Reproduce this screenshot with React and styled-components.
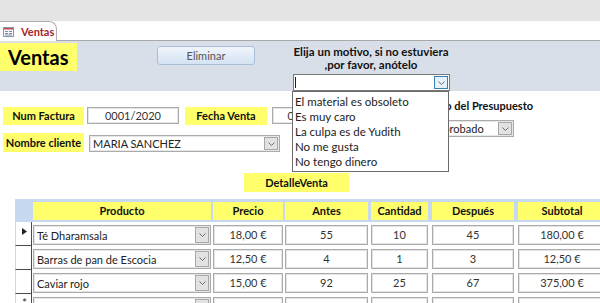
import React from 'react';
import styled, { createGlobalStyle } from 'styled-components';

const GlobalStyle = createGlobalStyle`
  body {
    margin: 0;
    font-family: Lato, "Liberation Sans", sans-serif;
  }
`;

const Screen = styled.div`
  width: 600px;
  height: 303px;
  overflow: hidden;
  background: #fff;
  display: flex;
  flex-direction: column;
  font-size: 11px;
  color: #222;
`;

const TopGray = styled.div`
  height: 21px;
  flex: none;
  background: #e4e4e4;
`;

const TabStrip = styled.div`
  height: 19px;
  flex: none;
  display: flex;
  background: #fff;
  border-bottom: 1px solid #a9a9a9;
`;

const Tab = styled.div`
  width: 57px;
  height: 20px;
  box-sizing: border-box;
  display: flex;
  align-items: center;
  gap: 7px;
  padding-left: 3px;
  background: #fff;
  border-top: 1px solid #b0b0b0;
  border-right: 1px solid #b0b0b0;
  border-top-right-radius: 8px;
  color: #a4262c;
  font-weight: 700;
  font-size: 11px;
`;

const HeaderBand = styled.div`
  height: 50px;
  flex: none;
  display: flex;
  align-items: flex-start;
  background: #d9dfe9;
  position: relative;
  z-index: 2;
`;

const Title = styled.div`
  margin-top: 2px;
  width: 77px;
  height: 28px;
  box-sizing: border-box;
  padding-left: 8px;
  background: #ffff6b;
  color: #000;
  font-size: 20px;
  font-weight: 700;
  line-height: 28px;
`;

const Button = styled.button`
  margin: 5px 0 0 80px;
  width: 98px;
  height: 19px;
  padding: 0;
  border: 1px solid #a9bfd9;
  border-radius: 3px;
  background: linear-gradient(#f0f5fb, #d4e3f4);
  color: #555;
  font-family: inherit;
  font-size: 11px;
`;

const Motive = styled.div`
  margin: 4px 0 0 38px;
  width: 156px;
  position: relative;
`;

const MotiveLabel = styled.div`
  font-weight: 700;
  font-size: 11.5px;
  text-align: center;
  line-height: 13px;
  color: #111;
  margin-bottom: 3px;
  white-space: nowrap;
`;

const Combo = styled.div`
  width: ${p => p.$width}px;
  height: ${p => p.$height || 17}px;
  box-sizing: border-box;
  display: flex;
  background: #fff;
  border: 1px solid ${p => (p.$active ? '#7a7a7a' : '#ababab')};
  box-shadow: ${p => (p.$active ? 'none' : 'inset 0 0 0 1px #e6e6e6')};
`;

const ComboText = styled.div`
  flex: 1;
  padding-left: 3px;
  display: flex;
  align-items: center;
  white-space: nowrap;
  overflow: hidden;
  color: #222;
  border-left: ${p => (p.$caret ? '1px solid #222' : 'none')};
  margin: ${p => (p.$caret ? '2px 0 2px 1px' : '0')};
`;

const DropButton = styled.div`
  width: 14px;
  flex: none;
  display: flex;
  align-items: center;
  justify-content: center;
  box-sizing: border-box;
  margin: 1px;
  background: ${p => (p.$active ? '#e5f1fb' : '#e2e2e2')};
  border: 1px solid ${p => (p.$active ? '#3c7fb1' : '#a8a8a8')};
`;

const DropList = styled.div`
  position: absolute;
  top: 100%;
  left: -1px;
  width: 157px;
  box-sizing: border-box;
  padding: 2px 0 2px 2px;
  background: #fff;
  border: 1px solid #6a6a6a;
`;

const DropItem = styled.div`
  line-height: 15px;
  font-size: 11.5px;
  color: #222;
`;

const Body = styled.div`
  display: flex;
  flex-direction: column;
`;

const Fields = styled.div`
  display: flex;
  align-items: flex-start;
`;

const LeftCol = styled.div`
  padding: 16px 0 0 3px;
  width: 350px;
`;

const FieldRow = styled.div`
  display: flex;
  align-items: flex-start;
  margin-top: ${p => p.$top || 0}px;
`;

const Label = styled.div`
  width: ${p => p.$width}px;
  height: ${p => p.$height || 18}px;
  margin-left: ${p => p.$left || 0}px;
  flex: none;
  background: #ffff6b;
  color: #111;
  font-weight: 700;
  text-align: center;
  line-height: ${p => p.$height || 18}px;
  white-space: nowrap;
`;

const TextBox = styled.div`
  width: ${p => p.$width}px;
  height: 17px;
  margin-left: ${p => p.$left || 0}px;
  flex: none;
  box-sizing: border-box;
  border: 1px solid #ababab;
  box-shadow: inset 0 0 0 1px #e6e6e6;
  text-align: center;
  line-height: 15px;
  color: #333;
`;

const Spaced = styled.div`
  margin: ${p => p.$margin};
`;

const EstadoCol = styled.div`
  margin: 8px 0 0 58px;
  width: 122px;
`;

const EstadoLabel = styled.div`
  font-weight: 700;
  text-align: right;
  line-height: 14px;
  color: #111;
  margin-bottom: 7px;
  white-space: nowrap;
`;

const Table = styled.div`
  margin: 7px 0 0 15px;
  width: 600px;
  flex: none;
`;

const columns = '18px 180px 72px 86px 61px 86px 90px';

const HeadRow = styled.div`
  display: grid;
  grid-template-columns: ${columns};
  padding: 3px 0 2px;
  background: #c6d9f0;
`;

const HeadCell = styled.div`
  width: calc(100% - ${p => p.$gap}px);
  height: 18px;
  background: #ffff6b;
  color: #111;
  font-weight: 700;
  text-align: center;
  line-height: 18px;
`;

const DataRow = styled.div`
  display: grid;
  grid-template-columns: ${columns};
  height: 24px;
`;

const Selector = styled.div`
  width: 17px;
  box-sizing: border-box;
  border-left: 1px solid #c6d9f0;
  border-right: 1px solid #4a4a4a;
  border-bottom: 1px solid #4a4a4a;
  padding: 5px 0 0 6px;
  font-size: 12px;
  line-height: 8px;
  color: #333;
`;

const Cell = styled.div`
  margin-top: 3px;
  width: calc(100% - ${p => p.$gap}px);
  height: 20px;
  box-sizing: border-box;
  border: 1px solid #ababab;
  box-shadow: inset 0 0 0 1px #e4e4e4;
  text-align: center;
  line-height: 18px;
  color: #333;
`;

const Chevron = () => (
  <svg width="7" height="4" viewBox="0 0 7 4">
    <path d="M0.5 0.5 L3.5 3.5 L6.5 0.5" fill="none" stroke="#6d6d6d" strokeWidth="1" />
  </svg>
);

const FormIcon = () => (
  <svg width="11" height="10" viewBox="0 0 11 10">
    <rect x="0.5" y="0.5" width="10" height="9" fill="#f4f6fa" stroke="#8a96aa" />
    <rect x="1" y="1" width="9" height="1.5" fill="#c0504d" />
    <path d="M2 4.5h3M2 6.5h3M6 4.5h3M6 6.5h3M2 8h7" stroke="#7f8ea6" />
  </svg>
);

const Arrow = () => (
  <svg width="5" height="7" viewBox="0 0 5 7">
    <path d="M0 0 L5 3.5 L0 7 Z" fill="#222" />
  </svg>
);

const motivos = [
  'El material es obsoleto',
  'Es muy caro',
  'La culpa es de Yudith',
  'No me gusta',
  'No tengo dinero'
];

const lineas = [
  { producto: 'Té Dharamsala', precio: '18,00 €', antes: 55, cantidad: 10, despues: 45, subtotal: '180,00 €' },
  { producto: 'Barras de pan de Escocia', precio: '12,50 €', antes: 4, cantidad: 1, despues: 3, subtotal: '12,50 €' },
  { producto: 'Caviar rojo', precio: '15,00 €', antes: 92, cantidad: 25, despues: 67, subtotal: '375,00 €' },
  { producto: '', precio: '', antes: '', cantidad: '', despues: '', subtotal: '', nuevo: true }
];

const heads = [
  { name: 'Producto', gap: 2 },
  { name: 'Precio', gap: 2 },
  { name: 'Antes', gap: 3 },
  { name: 'Cantidad', gap: 4 },
  { name: 'Después', gap: 4 },
  { name: 'Subtotal', gap: 2 }
];

const App = () => {
  return (
    <Screen>
      <GlobalStyle />
      <TopGray />
      <TabStrip>
        <Tab>
          <FormIcon />
          <span>Ventas</span>
        </Tab>
      </TabStrip>

      <HeaderBand>
        <Title>Ventas</Title>
        <Button>Eliminar</Button>
        <Motive>
          <MotiveLabel>
            Elija un motivo, si no estuviera
            <br />
            ,por favor, anótelo
          </MotiveLabel>
          <Combo $width={157} $active>
            <ComboText $caret />
            <DropButton $active>
              <Chevron />
            </DropButton>
          </Combo>
          <DropList>
            {motivos.map(m => (
              <DropItem key={m}>{m}</DropItem>
            ))}
          </DropList>
        </Motive>
      </HeaderBand>

      <Body>
        <Fields>
          <LeftCol>
            <FieldRow>
              <Label $width={81}>Num Factura</Label>
              <TextBox $width={92} $left={3}>0001/2020</TextBox>
              <Label $width={82} $left={6}>Fecha Venta</Label>
              <TextBox $width={92} $left={5}>01/03/2020</TextBox>
            </FieldRow>
            <FieldRow $top={8}>
              <Label $width={81} $height={19}>Nombre cliente</Label>
              <Spaced $margin="2px 0 0 5px">
                <Combo $width={191}>
                  <ComboText>MARIA SANCHEZ</ComboText>
                  <DropButton>
                    <Chevron />
                  </DropButton>
                </Combo>
              </Spaced>
            </FieldRow>
          </LeftCol>
          <EstadoCol>
            <EstadoLabel>Estado del Presupuesto</EstadoLabel>
            <Spaced $margin="0 0 0 21px">
              <Combo $width={82}>
                <ComboText>Aprobado</ComboText>
                <DropButton>
                  <Chevron />
                </DropButton>
              </Combo>
            </Spaced>
          </EstadoCol>
        </Fields>

        <Spaced $margin="21px 0 0 244px">
          <Label $width={105} $height={19}>DetalleVenta</Label>
        </Spaced>

        <Table>
          <HeadRow>
            <div />
            {heads.map(h => (
              <HeadCell key={h.name} $gap={h.gap}>{h.name}</HeadCell>
            ))}
          </HeadRow>
          {lineas.map((l, i) => (
            <DataRow key={i}>
              <Selector>{i === 0 ? <Arrow /> : l.nuevo ? '*' : ''}</Selector>
              <Spaced $margin="3px 0 0 0">
                <Combo $width={178} $height={20}>
                  <ComboText>{l.producto}</ComboText>
                  <DropButton>
                    <Chevron />
                  </DropButton>
                </Combo>
              </Spaced>
              <Cell $gap={2}>{l.precio}</Cell>
              <Cell $gap={3}>{l.antes}</Cell>
              <Cell $gap={4}>{l.cantidad}</Cell>
              <Cell $gap={4}>{l.despues}</Cell>
              <Cell $gap={2}>{l.subtotal}</Cell>
            </DataRow>
          ))}
        </Table>
      </Body>
    </Screen>
  );
};

export default App;
